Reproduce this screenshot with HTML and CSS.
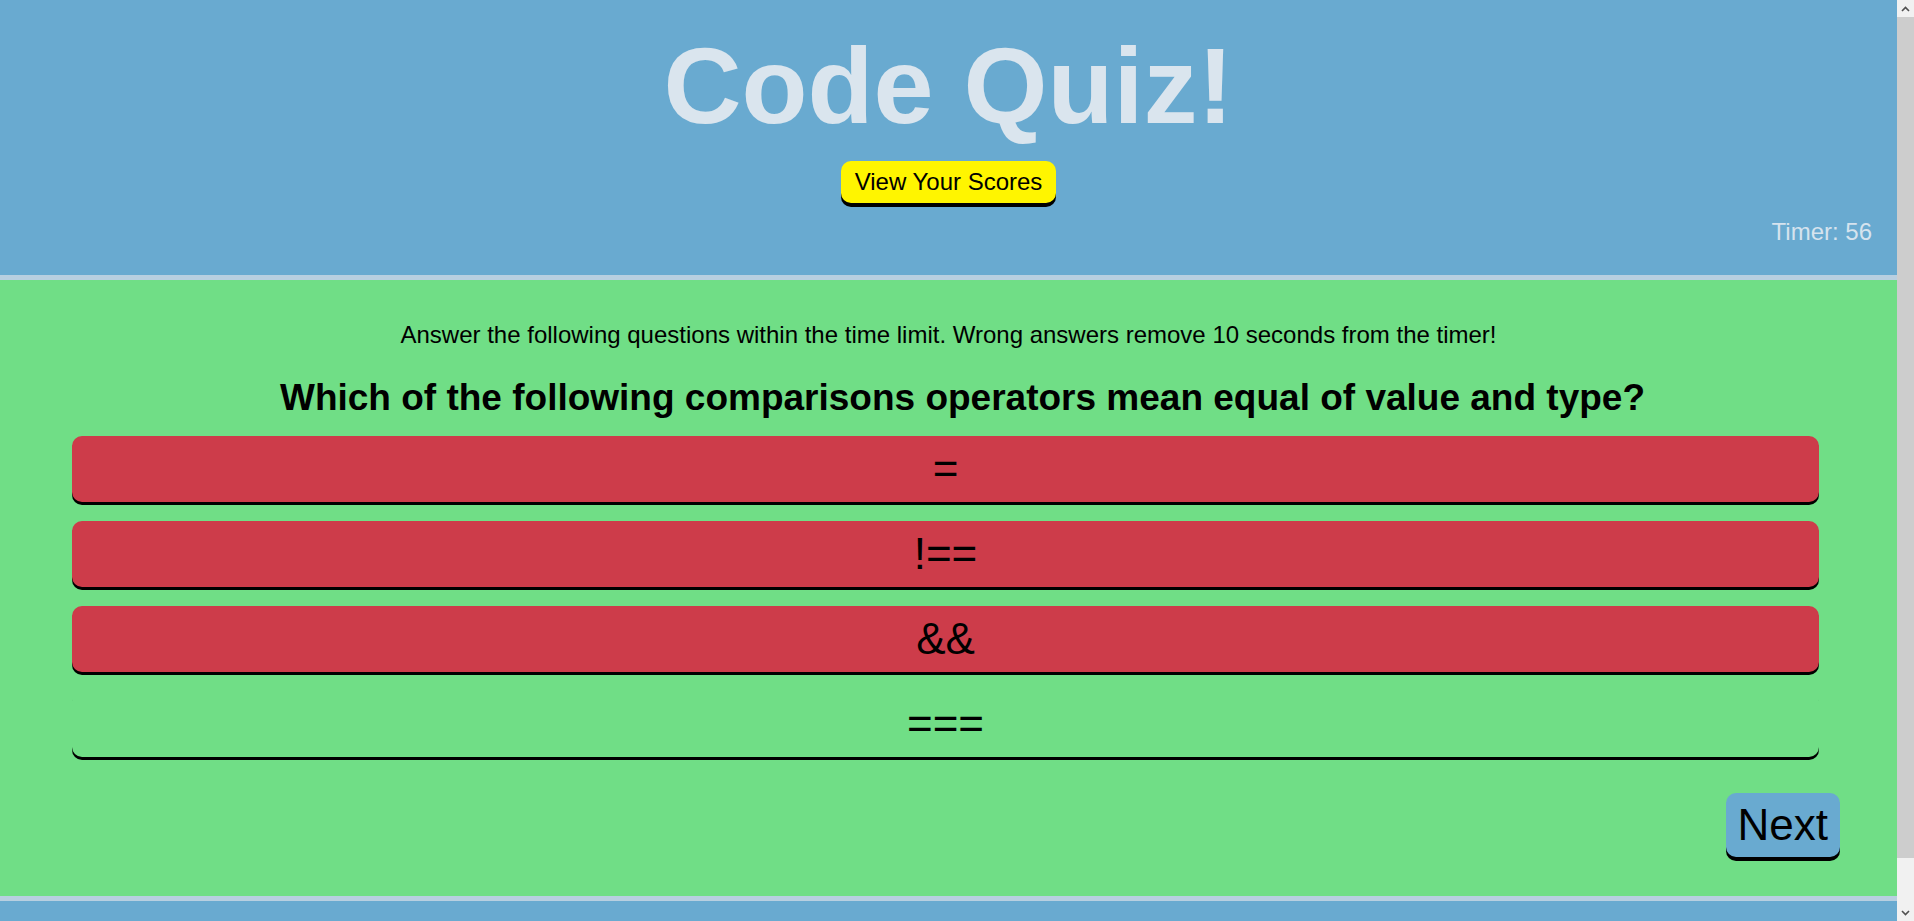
FILE: index.html
```html
<!DOCTYPE html>
<html lang="en">
<head>
<meta charset="utf-8">
<title>Code Quiz</title>
<link rel="stylesheet" href="styles.css">
</head>
<body>
<div class="page">
  <header class="top">
    <h1 class="title">Code Quiz!</h1>
    <button class="scores-btn">View Your Scores</button>
    <div class="timer">Timer: 56</div>
  </header>
  <main class="quiz">
    <p class="intro">Answer the following questions within the time limit. Wrong answers remove 10 seconds from the timer!</p>
    <h2 class="question">Which of the following comparisons operators mean equal of value and type?</h2>
    <div class="answers">
      <button class="answer wrong">=</button>
      <button class="answer wrong">!==</button>
      <button class="answer wrong">&amp;&amp;</button>
      <button class="answer">===</button>
    </div>
    <div class="actions">
      <button class="next">Next</button>
    </div>
  </main>
  <footer class="bottom"></footer>
</div>
<aside class="scrollbar" aria-hidden="true">
  <div class="sb-arrow">
    <svg width="9" height="6" viewBox="0 0 9 6"><path d="M1 5 L4.5 1.5 L8 5" fill="none" stroke="#505050" stroke-width="1.6"/></svg>
  </div>
  <div class="sb-thumb"></div>
  <div class="sb-track"></div>
  <div class="sb-arrow">
    <svg width="9" height="6" viewBox="0 0 9 6"><path d="M1 1 L4.5 4.5 L8 1" fill="none" stroke="#505050" stroke-width="1.6"/></svg>
  </div>
</aside>
</body>
</html>
```
FILE: styles.css
```css
html, body {
  margin: 0;
  padding: 0;
}
body {
  font-family: "Liberation Sans", Arial, sans-serif;
  color: #000;
  background: #69aad0;
}
.page {
  margin-right: 17px;
}
.top {
  background: #69aad0;
  border-bottom: 5px solid #b8cfe0;
  padding: 24px 0 30px;
  display: flex;
  flex-direction: column;
  align-items: center;
}
.title {
  margin: 0;
  font-size: 108px;
  font-weight: bold;
  line-height: 124px;
  color: #dae5ee;
}
.scores-btn {
  margin-top: 13px;
  font-family: inherit;
  font-size: 24px;
  line-height: 28px;
  padding: 7px 14px;
  background: #fff500;
  color: #000;
  border: none;
  border-radius: 10px;
  box-shadow: 0 4px 0 #000;
}
.timer {
  align-self: stretch;
  text-align: right;
  margin-top: 15px;
  padding-right: 25px;
  font-size: 24px;
  line-height: 27px;
  color: #d6e3ee;
}
.quiz {
  background: #70de86;
  border-bottom: 5px solid #b8cfe0;
  padding: 41px 0 39px;
}
.intro {
  margin: 0;
  text-align: center;
  font-size: 24px;
  line-height: 28px;
}
.question {
  margin: 28px 0 0;
  padding-left: 28px;
  text-align: center;
  font-size: 37px;
  line-height: 42px;
  font-weight: bold;
}
.answers {
  margin: 17px 78px 0 72px;
  display: flex;
  flex-direction: column;
  gap: 19px;
}
.answer {
  font-family: inherit;
  font-size: 44px;
  line-height: 52px;
  padding: 7px 0;
  border: none;
  border-radius: 10px;
  background: transparent;
  color: #000;
  box-shadow: 0 3px 0 #000;
}
.answer.wrong {
  background: #cd3c4a;
}
.actions {
  display: flex;
  justify-content: flex-end;
  margin-top: 36px;
  padding-right: 57px;
}
.next {
  font-family: inherit;
  font-size: 44px;
  line-height: 50px;
  padding: 7px 12px;
  border: none;
  border-radius: 10px;
  background: #69aad0;
  color: #000;
  box-shadow: 0 4px 0 #000;
}
.bottom {
  height: 70px;
  background: #69aad0;
}
.scrollbar {
  position: fixed;
  top: 0;
  right: 0;
  bottom: 0;
  width: 17px;
  display: flex;
  flex-direction: column;
  background: #f1f1f1;
}
.sb-arrow {
  height: 17px;
  display: flex;
  align-items: center;
  justify-content: center;
  background: #f1f1f1;
}
.sb-thumb {
  height: 841px;
  background: #cdcdcd;
}
.sb-track {
  flex: 1;
}
```
